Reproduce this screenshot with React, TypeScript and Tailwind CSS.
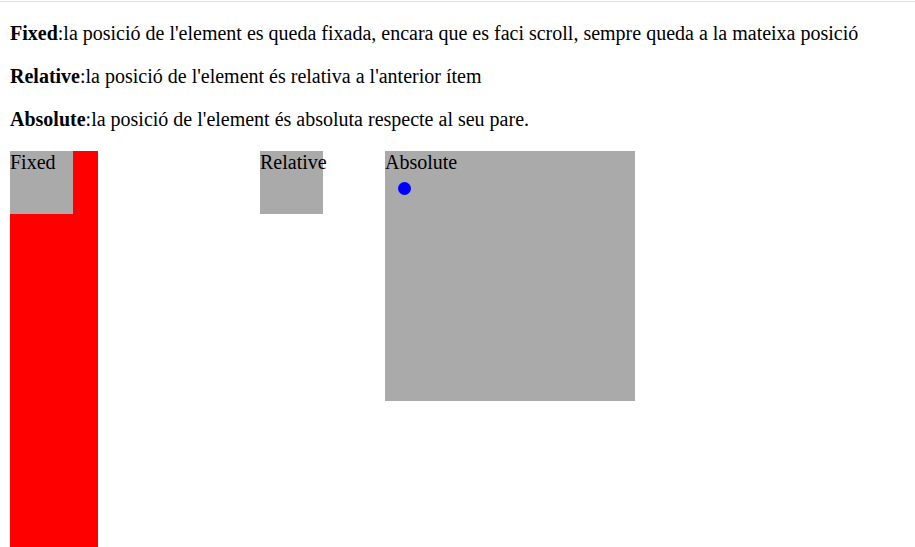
export default function App() {
  return (
    <div className="h-[547px] overflow-hidden bg-white text-black text-[20px] leading-[23px]" style={{ fontFamily: '"Liberation Serif", "Times New Roman", serif' }}>
      <div className="h-[2px] border-b border-[#e0e0e0]" />
      <div className="px-[10px] pt-[20px]">
        <p>
          <b>Fixed</b>:la posició de l'element es queda fixada, encara que es faci scroll, sempre queda a la mateixa posició
        </p>
        <p className="mt-[20px]">
          <b>Relative</b>:la posició de l'element és relativa a l'anterior ítem
        </p>
        <p className="mt-[20px]">
          <b>Absolute</b>:la posició de l'element és absoluta respecte al seu pare.
        </p>
        <div className="mt-[20px] flex items-start">
          <div className="w-[88px] h-[396px] bg-[#ff0000]">
            <div className="w-[63px] h-[63px] bg-[#aaaaaa]">Fixed</div>
          </div>
          <div className="ml-[162px] w-[63px] h-[63px] bg-[#aaaaaa] whitespace-nowrap">Relative</div>
          <div className="relative ml-[62px] w-[250px] h-[250px] bg-[#aaaaaa]">
            Absolute
            <div className="absolute left-[13px] top-[31px] w-[13px] h-[13px] rounded-full bg-[#0000ff]" />
          </div>
        </div>
      </div>
    </div>
  );
}
